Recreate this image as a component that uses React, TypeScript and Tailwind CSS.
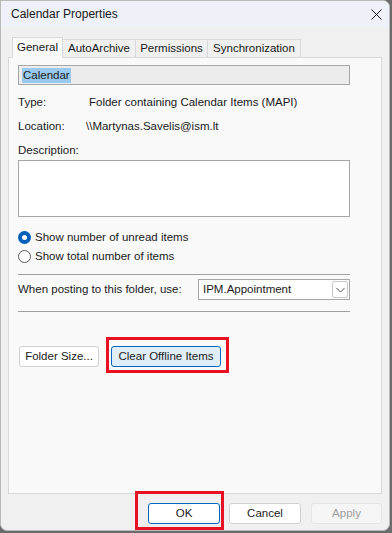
import React from "react";

const font = "font-['Liberation_Sans',Arial,sans-serif]";

function Radio({ checked, label }: { checked?: boolean; label: string }) {
  return (
    <div className="flex items-center h-[19px]">
      {checked ? (
        <span className="w-[13px] h-[13px] rounded-full bg-[#005fb8] flex items-center justify-center">
          <span className="w-[5px] h-[5px] rounded-full bg-white" />
        </span>
      ) : (
        <span className="w-[13px] h-[13px] rounded-full border border-[#5c5c5c] bg-white" />
      )}
      <span className="ml-[4px] text-[11.5px] text-[#1a1a1a]">{label}</span>
    </div>
  );
}

function Btn({
  children,
  className = "",
}: {
  children: React.ReactNode;
  className?: string;
}) {
  return (
    <button
      className={`h-[21px] rounded-[3px] border text-[11.5px] flex items-center justify-center ${className}`}
    >
      {children}
    </button>
  );
}

export default function App() {
  const tabs = [
    { name: "General", w: "w-[51px]" },
    { name: "AutoArchive", w: "w-[73px]" },
    { name: "Permissions", w: "w-[72px]" },
    { name: "Synchronization", w: "w-[93px]" },
  ];

  return (
    <div className={`w-[392px] h-[533px] bg-[#6b6b6b] overflow-hidden ${font}`}>
      <div className="w-[390px] h-[531px] bg-[#f0f0f0] border border-[#b9b9b9] rounded-b-[7px] rounded-tr-[7px] flex flex-col overflow-hidden">
        {/* title bar */}
        <div className="h-[26px] bg-[#eef1f8] flex items-center justify-between pl-[10px] pr-[7px]">
          <span className="text-[12px] text-[#1a1a1a]">Calendar Properties</span>
          <svg width="11" height="11" viewBox="0 0 11 11">
            <path d="M0.5 0.5 L10.5 10.5 M10.5 0.5 L0.5 10.5" stroke="#1a1a1a" strokeWidth="1" />
          </svg>
        </div>

        {/* tabs */}
        <div className="flex items-end pl-[11px] h-[30px]">
          {tabs.map((t, i) =>
            i === 0 ? (
              <div
                key={t.name}
                className={`${t.w} h-[21px] bg-[#f9f9f9] border border-b-0 border-[#d9d9d9] text-[11.5px] text-[#1a1a1a] flex items-center justify-center relative top-[1px] z-10`}
              >
                {t.name}
              </div>
            ) : (
              <div
                key={t.name}
                className={`${t.w} h-[18px] bg-[#f0f0f0] border border-b-0 border-l-0 border-[#d9d9d9] text-[11.5px] text-[#1a1a1a] flex items-center justify-center`}
              >
                {t.name}
              </div>
            )
          )}
        </div>

        {/* panel */}
        <div className="mx-[7px] h-[437px] bg-[#f9f9f9] border border-[#d9d9d9] pl-[9px] pr-[31px] flex flex-col">
          <div className="mt-[7px] h-[20px] bg-[#ececec] border border-[#a6a6a6] flex items-center pl-[3px]">
            <span className="bg-[#99c9ef] text-[11.5px] text-[#1a1a1a] px-[1px] leading-[15px]">Calendar</span>
          </div>

          <div className="mt-[10px] flex items-center h-[16px] text-[11.5px] text-[#1a1a1a]">
            <span className="w-[71px]">Type:</span>
            <span>Folder containing Calendar Items (MAPI)</span>
          </div>
          <div className="mt-[8px] flex items-center h-[16px] text-[11.5px] text-[#1a1a1a]">
            <span className="w-[68px]">Location:</span>
            <span>\\Martynas.Savelis@ism.lt</span>
          </div>
          <div className="mt-[8px] flex items-center h-[16px] text-[11.5px] text-[#1a1a1a]">
            <span>Description:</span>
          </div>
          <div className="mt-[1px] h-[57px] bg-white border border-[#a6a6a6]" />

          <div className="mt-[11px]">
            <Radio checked label="Show number of unread items" />
            <Radio label="Show total number of items" />
          </div>

          <div className="mt-[8px] h-px bg-[#a0a0a0]" />

          <div className="mt-[4px] flex items-center h-[21px]">
            <span className="text-[11.5px] text-[#1a1a1a] w-[180px]">When posting to this folder, use:</span>
            <div className="flex-1 h-[21px] bg-white border border-[#a6a6a6] flex items-center justify-between pl-[4px] pr-[1px]">
              <span className="text-[11.5px] text-[#1a1a1a]">IPM.Appointment</span>
              <span className="w-[16px] h-[17px] border border-[#c8c8c8] rounded-[2px] flex items-center justify-center">
                <svg width="9" height="6" viewBox="0 0 9 6">
                  <path d="M0.5 1 L4.5 5 L8.5 1" stroke="#555" strokeWidth="1" fill="none" />
                </svg>
              </span>
            </div>
          </div>

          <div className="mt-[11px] h-px bg-[#a0a0a0]" />

          <div className="mt-[34px] flex items-center">
            <Btn className="w-[80px] ml-[1px] bg-white border-[#d0d0d0] text-[#1a1a1a]">Folder Size...</Btn>
            <div className="relative ml-[12px]">
              <Btn className="w-[110px] bg-[#e0eef9] border-[#0067c0] text-[#1a1a1a]">Clear Offline Items</Btn>
              <span className="absolute left-[-5px] right-[-8px] top-[-9px] bottom-[-6px] border-[3px] border-[#e81123]" />
            </div>
          </div>
        </div>

        {/* footer */}
        <div className="flex justify-end items-center pr-[7px] mt-[9px]">
          <div className="relative">
            <Btn className="w-[72px] bg-white border-[#0067c0] text-[#1a1a1a]">OK</Btn>
            <span className="absolute left-[-13px] right-[-4px] top-[-12px] bottom-[-6px] border-[3px] border-[#e81123]" />
          </div>
          <Btn className="w-[72px] ml-[9px] bg-white border-[#d0d0d0] text-[#1a1a1a]">Cancel</Btn>
          <Btn className="w-[71px] ml-[10px] bg-[#f5f5f5] border-[#e5e5e5] text-[#9d9d9d]">Apply</Btn>
        </div>
      </div>
    </div>
  );
}
